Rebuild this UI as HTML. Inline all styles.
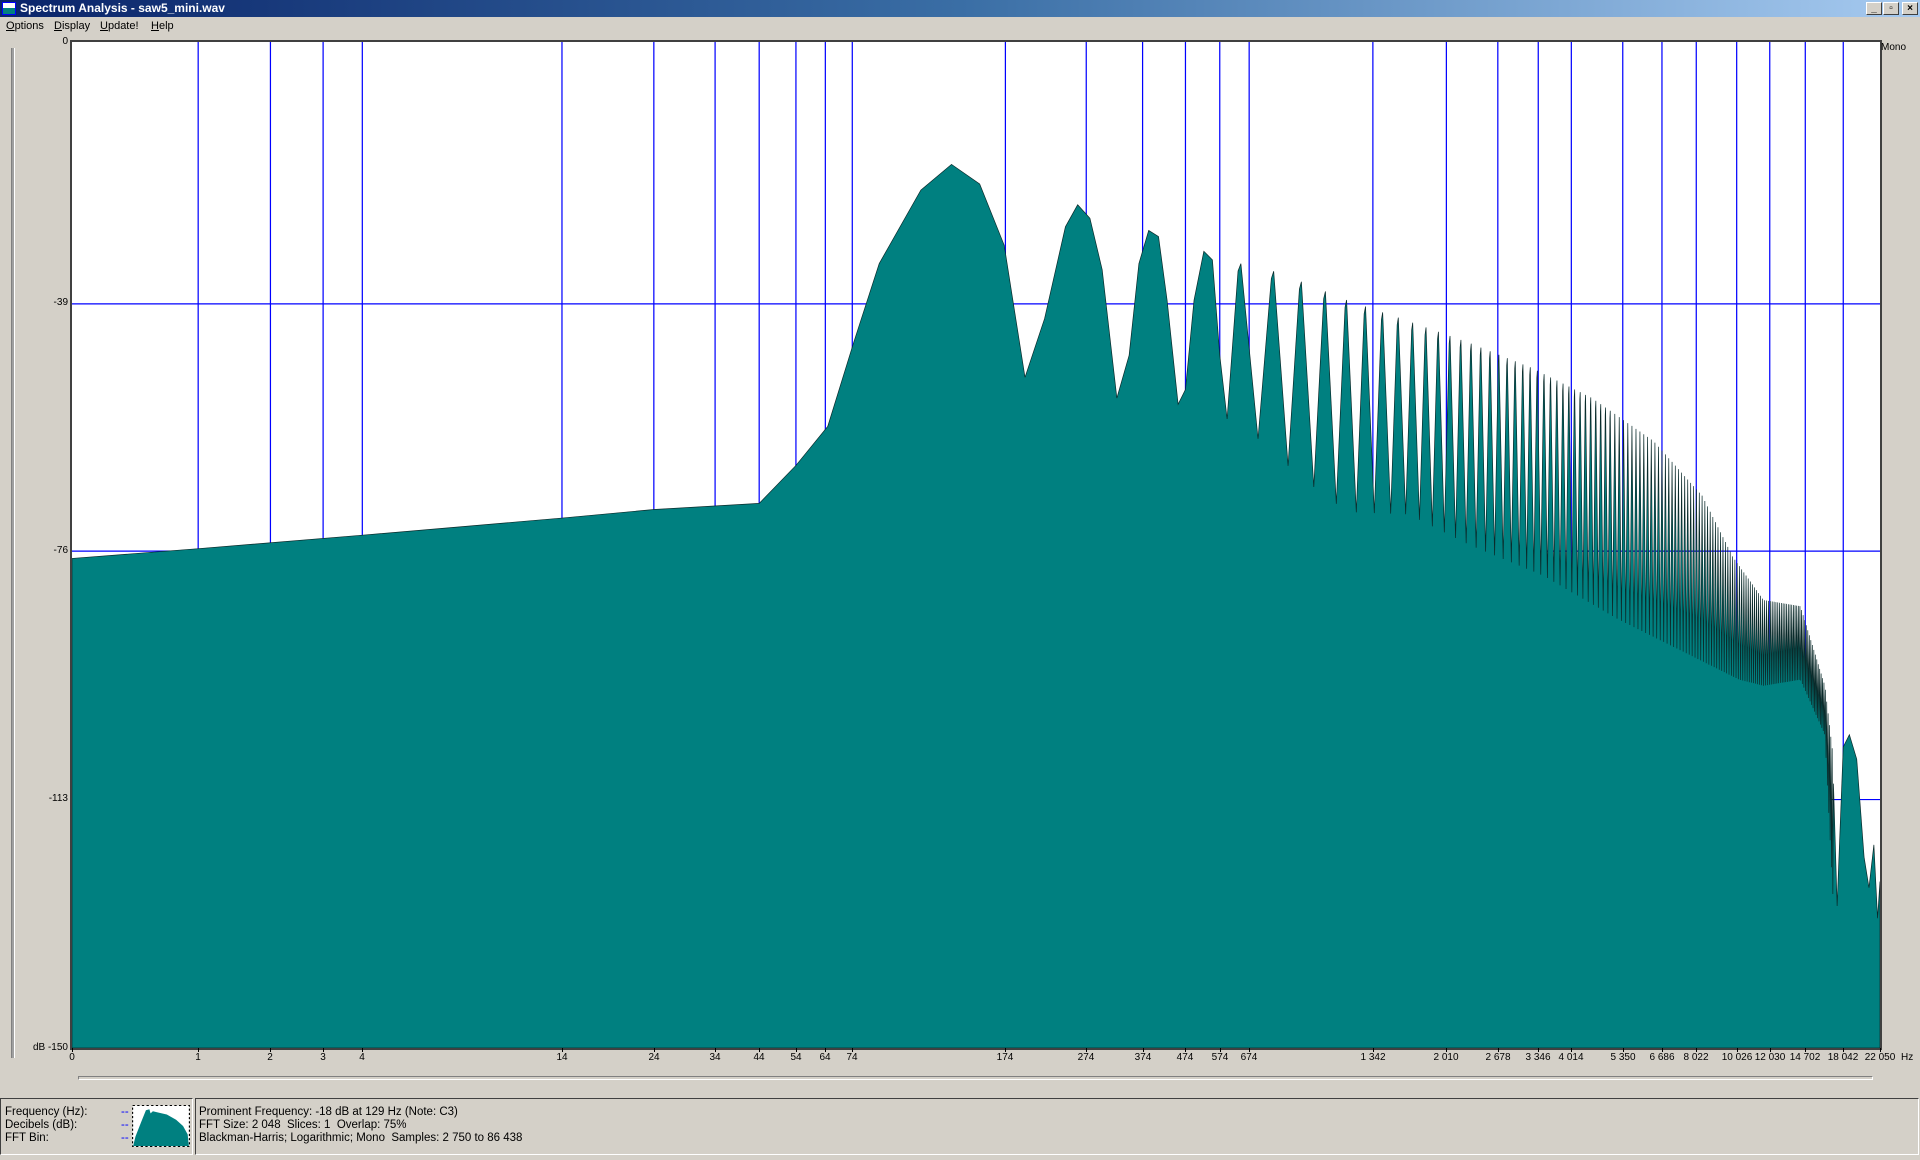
<!DOCTYPE html>
<html><head><meta charset="utf-8">
<style>
*{margin:0;padding:0;box-sizing:border-box}
body{width:1920px;height:1160px;background:#d4d0c8;font-family:"Liberation Sans",sans-serif;font-size:11px;color:#000;position:relative;overflow:hidden}
.abs{position:absolute}
#title{left:0;top:0;width:1920px;height:17px;background:linear-gradient(90deg,#0a246a 0%,#3a6ea5 50%,#a6caf0 100%);color:#fff;font-weight:bold;font-size:12px;line-height:17px;padding-left:20px}
.tb{top:2px;width:16px;height:13px;background:#d4d0c8;border:1px solid;border-color:#fff #404040 #404040 #fff;font-size:10px;line-height:11px;text-align:center;color:#000;font-weight:bold}
#menu{left:0;top:17px;height:19px;line-height:19px}
#menu span{position:absolute;top:0}
.xl{position:absolute;top:1052px;font-size:10px;transform:translateX(-50%);white-space:nowrap}
.tk{position:absolute;top:1048px;width:1px;height:4px;background:#000}
.yl{position:absolute;font-size:10px;right:1852px;white-space:nowrap}
.bt{position:absolute;font-size:11.5px;white-space:nowrap}
</style></head><body>
<div id="title" class="abs">Spectrum Analysis - saw5_mini.wav</div>
<div class="abs" style="left:2px;top:2px;width:14px;height:13px;background:#fff;border:1px solid #00f"><div style="position:absolute;left:0;bottom:0;width:12px;height:6px;background:#008080"></div></div>
<div class="abs tb" style="left:1866px">_</div>
<div class="abs tb" style="left:1883px">▫</div>
<div class="abs tb" style="left:1902px">×</div>
<div id="menu" class="abs" style="width:400px">
<span style="left:6px"><u>O</u>ptions</span><span style="left:54px"><u>D</u>isplay</span><span style="left:100px"><u>U</u>pdate!</span><span style="left:151px"><u>H</u>elp</span>
</div>
<div class="abs" style="left:11px;top:48px;width:4px;height:1010px;background:#a0a0a0;border-left:1px solid #808080;border-right:1px solid #fff"></div>
<div class="abs" style="left:70px;top:40px;width:1812px;height:1010px;background:#404040"></div>
<svg class="abs" style="left:72px;top:42px" width="1808" height="1006" viewBox="59 34 1476 822" preserveAspectRatio="none">
<rect x="59" y="34" width="1476" height="822" fill="#fff"/>
<g id="grid" stroke="#0000ff" stroke-width="1" vector-effect="non-scaling-stroke"></g>
<path id="curve" fill="#008080" stroke="#0a2a2a" stroke-width="0.7" vector-effect="non-scaling-stroke"/>
</svg>
<div class="abs" style="left:1881px;top:42px;font-size:10px">Mono</div>
<div class="yl" style="top:36px">0</div>
<div class="yl" style="top:297px">-39</div>
<div class="yl" style="top:545px">-76</div>
<div class="yl" style="top:793px">-113</div>
<div class="yl" style="top:1042px">dB -150</div>
<div id="xlabels"></div>
<div class="abs" style="left:1901px;top:1052px;font-size:10px">Hz</div>
<div class="abs" style="left:78px;top:1076px;width:1795px;height:4px;border:1px solid;border-color:#808080 #fff #fff #808080"></div>
<div class="abs" style="left:0;top:1098px;width:193px;height:57px;border:1px solid;border-color:#404040 #fff #fff #404040"></div>
<div class="abs" style="left:195px;top:1098px;width:1724px;height:57px;border:1px solid;border-color:#404040 #fff #fff #404040"></div>
<div class="bt" style="left:5px;top:1106px">Frequency (Hz):</div>
<div class="bt" style="left:5px;top:1119px">Decibels (dB):</div>
<div class="bt" style="left:5px;top:1132px">FFT Bin:</div>
<div class="bt" style="left:121px;top:1106px;color:#00f">--</div>
<div class="bt" style="left:121px;top:1119px;color:#00f">--</div>
<div class="bt" style="left:121px;top:1132px;color:#00f">--</div>
<svg class="abs" style="left:132px;top:1105px" width="58" height="42" viewBox="0 0 50 40" preserveAspectRatio="none">
<rect x="0.5" y="0.5" width="49" height="39" fill="#fff" stroke="#000" stroke-dasharray="2,2"/>
<path d="M1,39 L3,30 L8,16 L12,5 L15,4 L16,8 L18,6 L22,7 L30,9 L38,14 L44,20 L48,28 L49,39 Z" fill="#008080"/>
</svg>
<div class="bt" style="left:199px;top:1106px">Prominent Frequency: -18 dB at 129 Hz (Note: C3)</div>
<div class="bt" style="left:199px;top:1119px">FFT Size: 2 048&nbsp; Slices: 1&nbsp; Overlap: 75%</div>
<div class="bt" style="left:199px;top:1132px">Blackman-Harris; Logarithmic; Mono&nbsp; Samples: 2 750 to 86 438</div>
<script>
var vx=[162,221,264,296,459,534,584,620,650,674,696,821,887,933,968,996,1020,1121,1181,1223,1256,1283,1325,1357,1385,1418,1445,1474,1505];
var g=document.getElementById('grid'),s='';
vx.forEach(function(x){s+='<line x1="'+x+'" y1="34" x2="'+x+'" y2="856"/>';});
[248,450,653].forEach(function(y){s+='<line x1="59" y1="'+y+'" x2="1535" y2="'+y+'"/>';});
g.innerHTML=s;
var lx=[59,162,221,264,296,459,534,584,620,650,674,696,821,887,933,968,996,1020,1121,1181,1223,1256,1283,1325,1357,1385,1418,1445,1474,1505,1535];
var lt=["0","1","2","3","4","14","24","34","44","54","64","74","174","274","374","474","574","674","1 342","2 010","2 678","3 346","4 014","5 350","6 686","8 022","10 026","12 030","14 702","18 042","22 050"];
var h='';
lx.forEach(function(x,i){var r=Math.round(72+(x-59)*1808/1476);h+='<div class="tk" style="left:'+r+'px"></div><div class="xl" style="left:'+r+'px">'+lt[i]+'</div>';});
document.getElementById('xlabels').innerHTML=h;
function interp(t,x){if(x<=t[0][0])return t[0][1];for(var i=1;i<t.length;i++){if(x<=t[i][0]){var a=t[i-1],b=t[i];return a[1]+(b[1]-a[1])*(x-a[0])/(b[0]-a[0]);}}return t[t.length-1][1];}
var P=[[1013,215],[1043,222],[1100,245],[1150,262],[1200,280],[1250,300],[1300,325],[1350,360],[1390,405],[1415,455],[1440,490],[1470,495],[1490,560],[1497,620]];
var T=[[1000,342],[1030,360],[1060,388],[1100,418],[1150,420],[1200,445],[1260,470],[1320,505],[1380,535],[1420,555],[1440,560],[1470,555],[1490,600],[1497,740]];
var pts=[[59,456],[162,448],[296,437],[459,423],[534,416],[620,411],[650,380],[676,348],[697,280],[718,215],[752,155],[777,134],[800,150],[820,200],[837,308],[853,260],[870,185],[880,167],[890,178],[900,220],[912,325],[922,290],[930,215],[938,188],[946,193],[953,245],[962,330],[968,318],[975,245],[983,205],[990,212],[996,290],[1002,342]];
function hx(n){return 777+338*Math.log10(n);}
for(var n=5;n<=170;n++){var x=hx(n);if(x>1497)break;var xt=hx(n+0.5);
if(n<40)pts.push([x-0.15*(x-hx(n-0.5)),interp(P,x)+6]);pts.push([x,interp(P,x)]);
if(xt<1497)pts.push([xt,interp(T,xt)]);}
pts=pts.concat([[1497,640],[1500,740],[1505,610],[1510,600],[1516,620],[1522,700],[1526,725],[1530,690],[1533,750],[1535,720],[1535,856],[59,856]]);
document.getElementById('curve').setAttribute('d','M'+pts.map(function(p){return p[0].toFixed(2)+','+p[1].toFixed(1);}).join(' L')+' Z');
</script>
</body></html>
